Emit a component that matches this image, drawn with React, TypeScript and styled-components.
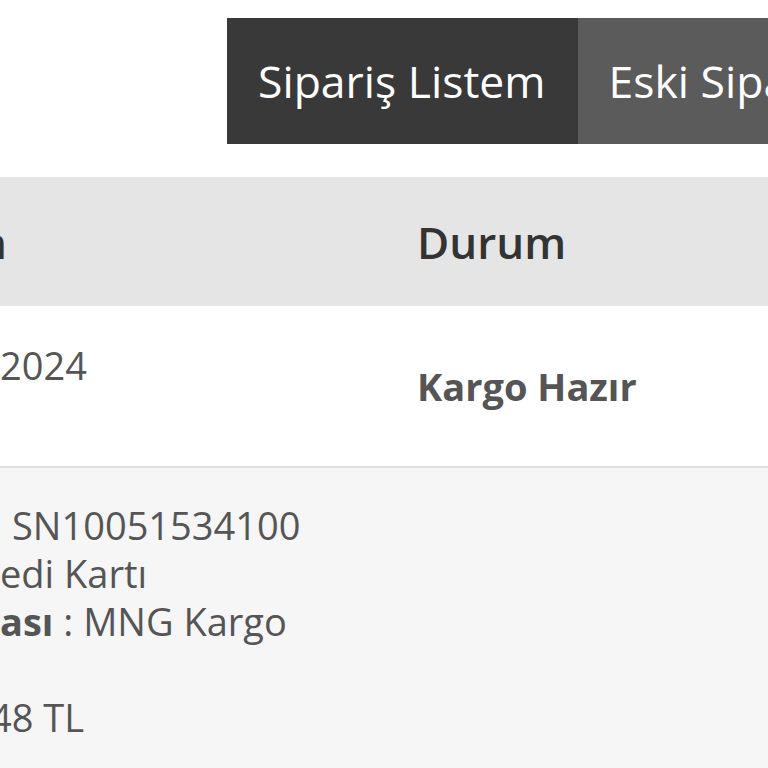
import styled, { createGlobalStyle } from "styled-components"

const GlobalStyle = createGlobalStyle`
  html, body {
    margin: 0;
    padding: 0;
    background: #ffffff;
  }
  body {
    font-family: "Open Sans", "Noto Sans", sans-serif;
  }
`

const Page = styled.div`
  width: 768px;
  height: 768px;
  overflow: hidden;
  background: #ffffff;
`

const TabBar = styled.div`
  display: flex;
  padding-left: 227px;
  margin-top: 18px;
`

const Tab = styled.div<{ $active?: boolean }>`
  flex-shrink: 0;
  height: 126px;
  display: flex;
  align-items: center;
  padding: 0 32px 0 31px;
  background: ${(p) => (p.$active ? "#393939" : "#5b5b5b")};
  color: #ffffff;
  font-size: 44.5px;
  line-height: 52px;
  white-space: nowrap;
`

const Table = styled.div`
  margin-top: 33px;
  display: grid;
  grid-template-columns: 417px 1fr;
`

const HeadCell = styled.div`
  background: #e5e5e5;
  height: 129px;
  display: flex;
  align-items: center;
  color: #333333;
  font-size: 44px;
  font-weight: 600;
  line-height: 52px;
`

const Cell = styled.div<{ $bg?: string; $top?: number; $height?: number }>`
  background: ${(p) => p.$bg || "#ffffff"};
  height: ${(p) => p.$height || 160}px;
  display: flex;
  flex-direction: column;
  justify-content: ${(p) => (p.$top ? "flex-start" : "center")};
  padding-top: ${(p) => p.$top || 0}px;
  box-sizing: border-box;
  color: #555555;
  font-size: 38px;
  line-height: 48px;
`

const Divider = styled.div`
  grid-column: 1 / -1;
  height: 2px;
  background: #dedede;
`

const Line = styled.div<{ $h?: number }>`
  display: flex;
  white-space: pre;
  height: ${(p) => p.$h || 48}px;
`

/* hidden part of a line: right-aligned to a fixed edge, the rest runs off the page */
const Cut = styled.span<{ $w: number }>`
  flex-shrink: 0;
  width: ${(p) => Math.max(p.$w, 0)}px;
  margin-left: ${(p) => Math.min(p.$w, 0)}px;
  display: flex;
  justify-content: flex-end;
  white-space: pre;
`

const Bold = styled.span`
  font-weight: 700;
`

const Status = styled.div`
  font-weight: 700;
`

const App = () => {
  return (
    <Page>
      <GlobalStyle />
      <TabBar>
        <Tab $active>Sipariş Listem</Tab>
        <Tab>Eski Siparişlerim</Tab>
      </TabBar>

      <Table>
        <HeadCell>
          <Line $h={52}>
            <Cut $w={7}>Tarih / Ürün</Cut>
          </Line>
        </HeadCell>
        <HeadCell>Durum</HeadCell>

        <Cell $top={35}>
          <Line>
            <Cut $w={0}>24.05.</Cut>2024
          </Line>
        </Cell>
        <Cell>
          <Status>Kargo Hazır</Status>
        </Cell>

        <Divider />

        <Cell $bg="#f6f6f6" $top={33} $height={300}>
          <Line>
            <Cut $w={12}>Sipariş No : </Cut>SN10051534100
          </Line>
          <Line>
            <Cut $w={0}>Ödeme Tipi : Kr</Cut>edi Kartı
          </Line>
          <Line>
            <Cut $w={0}>
              <Bold>Kargo Firm</Bold>
            </Cut>
            <Bold>ası</Bold> : MNG Kargo
          </Line>
          <Line />
          <Line>
            <Cut $w={-10}>Toplam Tutar : 1.2</Cut>48 TL
          </Line>
        </Cell>
        <Cell $bg="#f6f6f6" $height={300} />
      </Table>
    </Page>
  )
}

export default App
